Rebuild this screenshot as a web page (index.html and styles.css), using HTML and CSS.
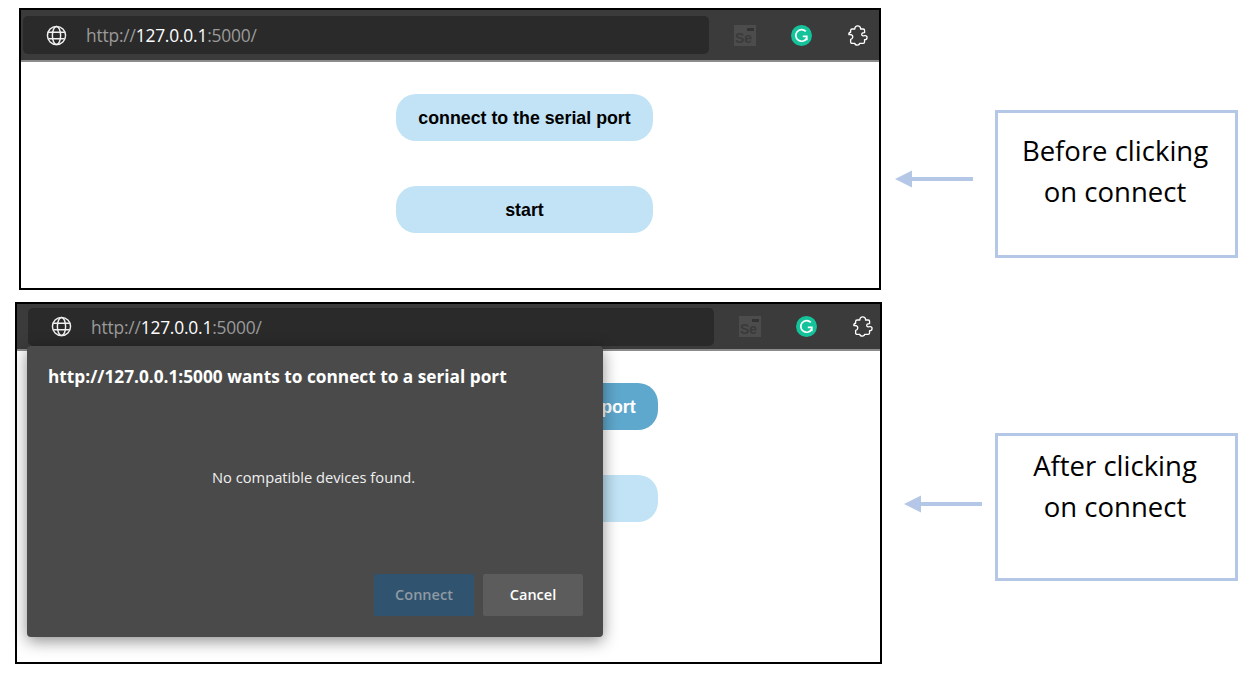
FILE: index.html
```html
<!DOCTYPE html>
<html lang="en">
<head>
  <meta charset="UTF-8">
  <title>Serial port connect</title>
  <link rel="stylesheet" href="styles.css">
</head>
<body>

  <svg class="defs" width="0" height="0">
    <symbol id="globe" viewBox="0 0 22 22">
      <g fill="none" stroke="currentColor" stroke-width="1.5">
        <circle cx="11" cy="11" r="9.5"/>
        <ellipse cx="11" cy="11" rx="4.3" ry="9.5"/>
        <path d="M2.4 7.6H19.6M2.4 14.4H19.6"/>
      </g>
    </symbol>
    <symbol id="grammarly" viewBox="0 0 21 21">
      <circle cx="10.5" cy="10.5" r="10.5" fill="#15c39a"/>
      <path d="M14.8 6.4A5.8 5.8 0 1 0 15.8 13M11.8 11.4H15.8V15.2" fill="none" stroke="#fff" stroke-width="1.7"/>
    </symbol>
    <symbol id="puzzle" viewBox="0 0 22 22">
      <path d="M8.2 4.2C8 2 9.5 1 11.2 1C13 1 14.5 2.2 14.2 4.2H17C17.9 4.2 18.4 4.8 18.4 5.6V8C16 7.8 15 9.2 15.6 10.6C16.2 11.6 17.5 11.4 18.4 11.2C20 10.8 21.2 12 21 13.5C20.8 15 19.5 15.6 18.4 15.3V17.6C18.4 18.6 17.8 19.2 16.8 19.2H13.2C13.2 20.4 12 21 10.8 21C9.5 21 8.3 20.2 8.2 19.2H5.4C4.4 19.2 3.8 18.6 3.8 17.6V15C5.2 15 6.2 13.6 6 12C5.8 10.6 4 9.8 2 10C1.6 8.5 2.5 7.5 3.8 7.6V5.8C3.8 4.8 4.4 4.2 5.4 4.2Z" fill="none" stroke="#fff" stroke-width="1.4" stroke-linejoin="round"/>
    </symbol>
    <symbol id="arrow" viewBox="0 0 78 18">
      <path d="M0 9L17 0.5V7H78V11H17V17.5Z" fill="#b4c7e7"/>
    </symbol>
  </svg>

  <div class="row row-before">
    <div class="frame">
      <div class="toolbar">
        <div class="address">
          <svg class="globe"><use href="#globe"/></svg>
          <span class="url">http://<b>127.0.0.1</b>:5000/</span>
        </div>
        <div class="selenium"><span>Se</span></div>
        <svg class="ext-icon grammarly"><use href="#grammarly"/></svg>
        <svg class="ext-icon"><use href="#puzzle"/></svg>
      </div>
      <div class="content">
        <button class="pill">connect to the serial port</button>
        <button class="pill">start</button>
      </div>
    </div>
    <svg class="arrow"><use href="#arrow"/></svg>
    <div class="note">Before clicking<br>on connect</div>
  </div>

  <div class="row row-after">
    <div class="frame">
      <div class="toolbar">
        <div class="address">
          <svg class="globe"><use href="#globe"/></svg>
          <span class="url">http://<b>127.0.0.1</b>:5000/</span>
        </div>
        <div class="selenium"><span>Se</span></div>
        <svg class="ext-icon grammarly"><use href="#grammarly"/></svg>
        <svg class="ext-icon"><use href="#puzzle"/></svg>
      </div>
      <div class="content">
        <button class="pill pill-active">connect to the serial port</button>
        <button class="pill">start</button>
      </div>

      <div class="dialog">
        <h2>http://127.0.0.1:5000 wants to connect to a serial port</h2>
        <p>No compatible devices found.</p>
        <div class="dialog-buttons">
          <button class="btn btn-connect">Connect</button>
          <button class="btn btn-cancel">Cancel</button>
        </div>
      </div>
    </div>
    <svg class="arrow"><use href="#arrow"/></svg>
    <div class="note">After clicking<br>on connect</div>
  </div>

</body>
</html>
```

FILE: styles.css
```css
body {
  margin: 0;
  background-color: #fff;
  color: #000;
  font-family: 'Open Sans', sans-serif;
}

.defs {
  position: absolute;
}

.row {
  display: flex;
  align-items: flex-start;
}

.row-before {
  margin-top: 8px;
  padding-left: 19px;
}

.row-after {
  margin-top: 12px;
  padding-left: 15px;
}

.frame {
  position: relative;
  box-sizing: border-box;
  border: 2px solid #000;
  background-color: #fff;
}

.row-before .frame {
  width: 862px;
  height: 282px;
}

.row-after .frame {
  width: 867px;
  height: 362px;
}

/* browser toolbar */
.toolbar {
  display: flex;
  align-items: center;
  box-sizing: border-box;
  background-color: #3b3b3b;
  border-bottom: 2px solid #8c8c8c;
}

.row-before .toolbar {
  height: 52px;
  padding-left: 2px;
}

.row-after .toolbar {
  height: 47px;
  padding-left: 11px;
}

.address {
  display: flex;
  align-items: center;
  box-sizing: border-box;
  width: 686px;
  height: 38px;
  padding-left: 23px;
  background-color: #2a2a2a;
  border-radius: 5px;
}

.globe {
  width: 21px;
  height: 21px;
  color: #f0f0f0;
}

.url {
  margin-left: 19px;
  font-size: 17.4px;
  letter-spacing: -0.2px;
  color: #9a9a9a;
}

.url b {
  font-weight: 500;
  color: #fff;
}

.selenium {
  position: relative;
  box-sizing: border-box;
  width: 22px;
  height: 21px;
  margin-left: 25px;
  padding: 6px 0 0 1px;
  background-color: #4c4c4c;
  font-family: 'Liberation Sans', sans-serif;
  font-size: 14px;
  font-weight: 700;
  line-height: 15px;
  color: #3a3a3a;
}

.selenium::after {
  content: "";
  position: absolute;
  top: 3px;
  right: 2px;
  width: 7px;
  height: 3px;
  background-color: #333;
}

.ext-icon {
  width: 21px;
  height: 21px;
  margin-left: 35px;
}

.grammarly {
  margin-left: 35px;
}

/* page buttons */
.content {
  display: flex;
  flex-direction: column;
  align-items: flex-start;
  gap: 45px;
}

.row-before .content {
  padding: 32px 0 0 375px;
}

.row-after .content {
  padding: 32px 0 0 384px;
}

.pill {
  width: 257px;
  height: 47px;
  padding: 2px 0 0;
  border: 0;
  border-radius: 20px;
  background-color: #c1e3f5;
  font-family: 'Liberation Sans', sans-serif;
  font-size: 17.8px;
  font-weight: 700;
  color: #000;
}

.pill-active {
  background-color: #5fa8cd;
  color: #fff;
}

/* permission dialog */
.dialog {
  position: absolute;
  top: 42px;
  left: 10px;
  display: flex;
  flex-direction: column;
  box-sizing: border-box;
  width: 576px;
  height: 291px;
  padding: 20px 20px 21px 21px;
  background-color: #4a4a4a;
  border-radius: 4px;
  box-shadow: 0 4px 16px rgba(0, 0, 0, 0.45);
  color: #fff;
}

.dialog h2 {
  margin: 0;
  font-size: 17.25px;
  font-weight: 700;
  line-height: 22px;
}

.dialog p {
  margin: 78px 4px 0 0;
  font-size: 14.7px;
  line-height: 22px;
  text-align: center;
  color: #f0f0f0;
}

.dialog-buttons {
  display: flex;
  justify-content: flex-end;
  gap: 9px;
  margin-top: auto;
}

.btn {
  width: 100px;
  height: 42px;
  padding: 0 0 2px;
  border: 0;
  border-radius: 2px;
  font-family: 'Open Sans', sans-serif;
  font-size: 14.5px;
  font-weight: 600;
}

.btn-connect {
  background-color: #30536f;
  color: #8f9aa3;
}

.btn-cancel {
  background-color: #5c5c5c;
  color: #fff;
}

/* annotations */
.arrow {
  width: 78px;
  height: 18px;
}

.row-before .arrow {
  margin: 162px 0 0 14px;
}

.row-after .arrow {
  margin: 193px 0 0 22px;
}

.note {
  box-sizing: border-box;
  width: 243px;
  height: 148px;
  padding-right: 3px;
  border: 3px solid #b4c7e7;
  font-size: 27.5px;
  line-height: 41px;
  text-align: center;
}

.row-before .note {
  margin: 102px 0 0 22px;
  padding-top: 17px;
}

.row-after .note {
  margin: 131px 0 0 13px;
  padding-top: 9px;
}
```
